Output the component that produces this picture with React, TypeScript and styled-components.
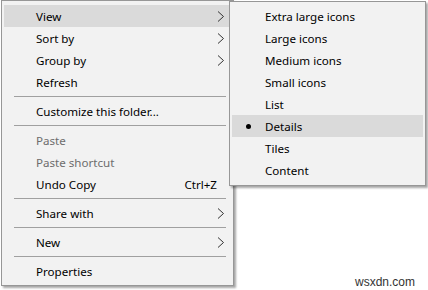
import React from 'react';
import styled, { createGlobalStyle } from 'styled-components';

const GlobalStyle = createGlobalStyle`
  html, body {
    margin: 0;
    padding: 0;
    background: #ffffff;
  }
  body {
    font-family: "Noto Sans", "Open Sans", sans-serif;
    font-size: 11.6px;
    color: #000;
  }
`;

const Page = styled.div`
  position: relative;
  width: 428px;
  height: 290px;
  overflow: hidden;
`;

const Menu = styled.div`
  box-sizing: border-box;
  margin-left: 1px;
  width: 233px;
  padding: 4px 3px 3px 2px;
  background: #f2f2f2;
  border: 1px solid #979797;
  box-shadow: 2px 2px 2px rgba(0, 0, 0, 0.35);
`;

// the open "View" submenu floats over the main menu
const SubMenu = styled(Menu)`
  position: absolute;
  left: 229px;
  top: 1px;
  margin-left: 0;
  width: 197px;
  padding: 3px 2px 4px 2px;
`;

const Row = styled.div<{ $active?: boolean; $disabled?: boolean; $indent?: number }>`
  display: flex;
  align-items: center;
  height: 22px;
  padding-left: ${p => p.$indent ?? 32}px;
  padding-right: 5px;
  background: ${p => (p.$active ? '#dadada' : 'transparent')};
  color: ${p => (p.$disabled ? '#6d6d6d' : '#000')};
  white-space: nowrap;
`;

const Label = styled.span`
  flex: 1;
`;

const Shortcut = styled.span`
  margin-right: 8px;
`;

const Arrow = styled.svg`
  flex: none;
`;

const BulletSlot = styled.span`
  display: flex;
  justify-content: center;
  align-items: center;
  width: 33px;
  flex: none;
`;

const Bullet = styled.span`
  width: 5px;
  height: 5px;
  border-radius: 50%;
  background: #000;
`;

const Separator = styled.div`
  height: 1px;
  margin: 3px 4px 3px 10px;
  background: #a0a0a0;
`;

const Watermark = styled.div`
  position: absolute;
  left: 355px;
  top: 275px;
  font-family: "Liberation Sans", Arial, sans-serif;
  font-size: 12px;
  color: #333;
`;

const Chevron = () => (
  <Arrow width="8" height="11" viewBox="0 0 8 11">
    <polyline points="1,0.5 6.5,5.5 1,10.5" fill="none" stroke="#333" strokeWidth="1" />
  </Arrow>
);

type Item = { label?: string; sub?: boolean; disabled?: boolean; shortcut?: string; active?: boolean; sep?: boolean };

const mainItems: Item[] = [
  { label: 'View', sub: true, active: true },
  { label: 'Sort by', sub: true },
  { label: 'Group by', sub: true },
  { label: 'Refresh' },
  { sep: true },
  { label: 'Customize this folder...' },
  { sep: true },
  { label: 'Paste', disabled: true },
  { label: 'Paste shortcut', disabled: true },
  { label: 'Undo Copy', shortcut: 'Ctrl+Z' },
  { sep: true },
  { label: 'Share with', sub: true },
  { sep: true },
  { label: 'New', sub: true },
  { sep: true },
  { label: 'Properties' },
];

const viewItems = ['Extra large icons', 'Large icons', 'Medium icons', 'Small icons', 'List', 'Details', 'Tiles', 'Content'];

export default function App() {
  return (
    <Page>
      <GlobalStyle />
      <Menu>
        {mainItems.map((item, i) =>
          item.sep ? (
            <Separator key={i} />
          ) : (
            <Row key={i} $active={item.active} $disabled={item.disabled}>
              <Label>{item.label}</Label>
              {item.shortcut && <Shortcut>{item.shortcut}</Shortcut>}
              {item.sub && <Chevron />}
            </Row>
          )
        )}
      </Menu>
      <SubMenu>
        {viewItems.map(v => (
          <Row key={v} $indent={0} $active={v === 'Details'}>
            <BulletSlot>{v === 'Details' && <Bullet />}</BulletSlot>
            <Label>{v}</Label>
          </Row>
        ))}
      </SubMenu>
      <Watermark>wsxdn.com</Watermark>
    </Page>
  );
}
